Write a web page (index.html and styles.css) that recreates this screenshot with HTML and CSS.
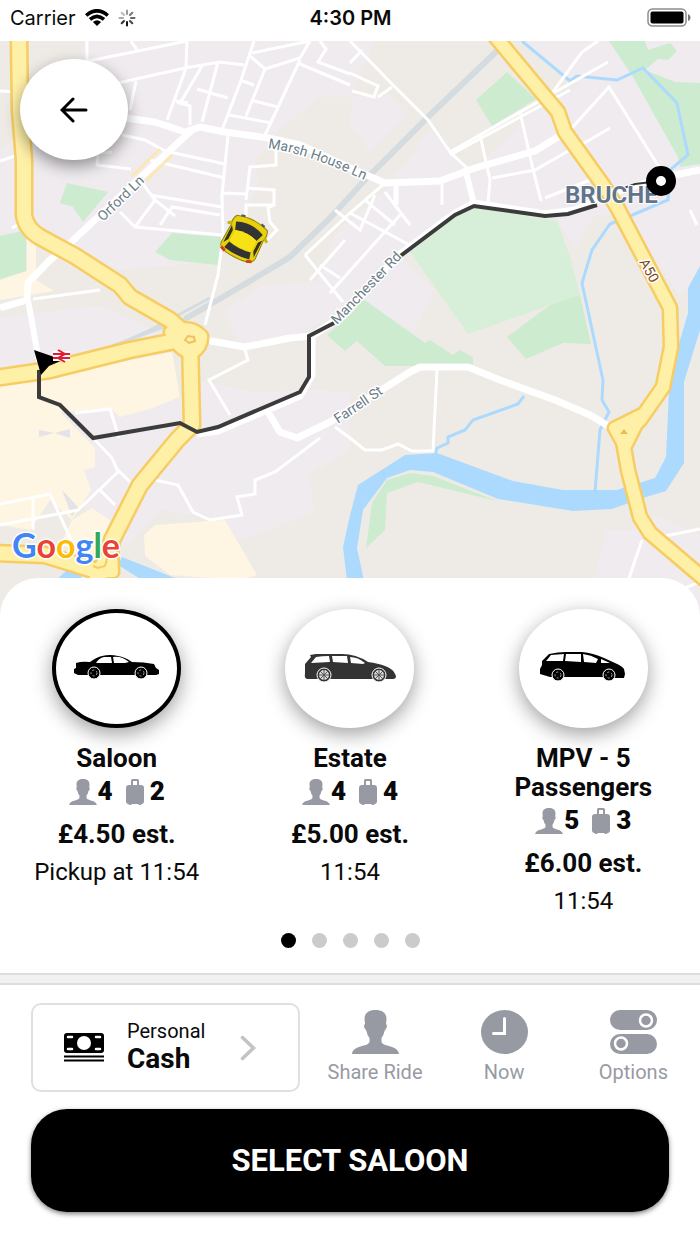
FILE: index.html
```html
<!DOCTYPE html>
<html lang="en">
<head>
<meta charset="utf-8">
<meta name="viewport" content="width=device-width, initial-scale=1">
<title>Choose a vehicle</title>
<link rel="stylesheet" href="styles.css">
</head>
<body>
<svg class="sprite" aria-hidden="true">
  <symbol id="person" viewBox="0 0 47 44">
    <path d="M23.500 0C30 0 34.500 3 34.500 9L34 14Q35.500 15 34.500 18L32.500 21Q31.500 26 29.500 28V32C31 37 46 35 47 44H0C1 35 16 37 17.500 32V28Q15 25 14.500 21L12.500 18Q11.500 15 13 14L12.500 9C12.500 3 17 0 23.500 0Z"/>
  </symbol>
  <symbol id="bag" viewBox="0 0 18 26">
    <path fill-rule="evenodd" d="M5 6V1.500Q5 0 6.500 0H11.500Q13 0 13 1.500V6H15Q18 6 18 9V22Q18 25 15.500 25Q15.500 26 14 26Q12.500 26 12 25H6Q5.500 26 4 26Q2.500 26 2.500 25Q0 25 0 22V9Q0 6 3 6ZM7 2V6H11V2Z"/>
  </symbol>
</svg>

<header class="status">
  <div class="status-left">
    <span class="carrier">Carrier</span>
    <svg class="wifi" viewBox="0 0 24 17" aria-hidden="true">
      <g fill="none" stroke="#000" stroke-width="3.600"><path d="M1.200 6.500Q12-2.900 22.800 6.500"/><path d="M5 10.400Q12 4.300 19 10.400"/></g>
      <path d="M12 17L7.900 12.900Q12 9.600 16.100 12.900Z"/>
    </svg>
    <svg class="spinner" viewBox="-9 -9 18 18" aria-hidden="true">
      <g stroke-width="2" stroke-linecap="round">
        <path stroke="#999" d="M0-7.500V-4"/><path stroke="#777" d="M5.300-5.300L3-3"/><path stroke="#666" d="M7.500 0H4"/><path stroke="#444" d="M5.300 5.300L3 3"/>
        <path stroke="#111" d="M0 7.500V4"/><path stroke="#333" d="M-5.300 5.300L-3 3"/><path stroke="#aaa" d="M-7.500 0H-4"/><path stroke="#bbb" d="M-5.300-5.300L-3-3"/>
      </g>
    </svg>
  </div>
  <time class="clock">4:30 PM</time>
  <svg class="battery" viewBox="0 0 44 19" aria-hidden="true">
    <rect x="1" y="1" width="38" height="17" rx="4.500" fill="#fff" stroke="#8d8d8d" stroke-width="1.500"/>
    <rect x="3.500" y="3.500" width="33" height="12" rx="2" fill="#000"/>
    <path d="M41 6Q43.500 7 43.500 9.500T41 13Z" fill="#777"/>
  </svg>
</header>

<main>
  <section class="map" aria-label="Map">
    <svg class="map-canvas" viewBox="0 41 700 580" preserveAspectRatio="xMidYMin slice">
      <rect y="41" width="700" height="580" fill="#eeebe6"/>
      <g fill="#efebef">
        <path d="M85 41H375L350 97H318L280 130L255 160L258 185L235 240L210 262L120 270L80 250L0 230V150L40 120L75 70Z"/>
        <path d="M352 97L392 95L406 116L370 152L350 125Z"/>
        <path d="M335 235L385 190L430 130L470 175L535 110L580 85L520 41H700V270L680 296L625 215L595 215L575 250L555 215L475 205L400 255L330 325L310 300Z"/>
        <path d="M225 310L262 285L320 282L335 310L310 330L240 345Z"/>
        <path d="M400 256L434 290L414 333L360 297Z"/>
        <path d="M0 318L100 305L165 335L110 353L0 367Z"/>
        <path d="M178 400L198 380L255 392L310 390L350 392V450L308 475L315 512L238 542L225 520L160 510L128 545L85 510L60 412Z"/>
        <path d="M606 530L645 530L655 515L700 535V621H585Z"/>
      </g>
      <g fill="#fef5e3">
        <path d="M0 385L172 352L180 397L150 409L120 417L112 410L60 412L95 448V467L84 470L91 490L72 520L50 500L30 530L0 525Z"/>
        <path d="M72 520L92 508L110 520L98 555L60 545Z"/>
        <path d="M144 535L155 525L225 520L257 575L240 580L170 575L145 556Z"/>
        <path d="M27 228H36V280L54 291L0 300V280L27 271Z"/>
      </g>
      <g fill="#e5e2e8"><path d="M39 430L54 433L39 437ZM55 433L70 429V438ZM62 490L78 507L72 517Z"/></g>
      <g fill="#cdebcf">
        <path d="M67 183L108 192L83 222L73 207L60 203Z"/><path d="M0 236L26 230V271L0 279Z"/>
        <path d="M172 233L222 237L218 265L170 260L155 252Z"/><path d="M507 72L536 99L492 126L476 100Z"/>
        <path d="M609 41H645L648 50L670 43L677 51L668 60L658 59L645 70L675 82L700 83V164L680 167L678 157L633 77Z"/>
        <path d="M580 295L591 344L563 343L526 359L507 337L550 305Z"/>
        <path d="M363 299L425 343L430 340L453 355L460 350L473 357V366H385L357 341L345 351L327 335L352 313Z"/>
        <path d="M372 503L387 480L410 473L433 476L497 501L418 482L387 493L385 530L366 548Z"/>
      </g>
      <path fill="#d7eed8" d="M410 252L460 213L477 208L557 221L570 257L580 295L550 305L468 334Z"/>
      <g fill="none" stroke="#d5dce0">
        <path stroke-width="6" d="M500 48L430 115L365 180L330 218L290 257L245 284L185 319"/>
        <path stroke-width="3" d="M185 319L80 358M210 298L150 330L105 350"/>
      </g>
      <g fill="#acdaff">
        <path d="M348 590L343 547L350 515L358 485L405 455L437 453L513 481L563 490H617L655 478L666 457L669 390L678 347L688 313V288L700 266V330L684 382V463L666 491L643 498L612 509L573 511L498 499L433 472L410 470L387 478L363 510L357 548L366 590Z"/>
        <path d="M122 557L180 580H142L118 565ZM74 564L56 580H80L90 560Z"/>
      </g>
      <g fill="none" stroke="#acdaff" stroke-width="3">
        <path d="M522 41L570 81L577 76L617 80L643 68L677 103L688 155L670 170L668 200L630 216L610 224L592 250L582 283L603 380L602 400L609 412L600 430L595 492"/>
        <path d="M524 396L518 404L473 420L465 430L448 437V443L437 448L435 455"/>
      </g>

      <g class="lane">
        <path d="M87 41V60M84 62L187 41M131 41L137 50M118 83L185 68L220 62L244 65M187 41L186 68L167 120M202 66L182 100L179 103L190 106V125M218 62L202 122M197 89L228 98M254 41L240 83L222 130M176 101L188 103M240 80L254 85M250 56L265 69L246 116M252 53L310 41M265 69L300 58L310 41M300 60L265 135M300 64L350 85M320 41L326 49L318 62L350 74M254 101L278 107M229 115L272 123"/>
        <path d="M136 81L130 110M122 135L145 140L165 151L225 164M112 152L98 153L97 165L131 169M150 160L225 178M228 135L222 195L223 235L218 275L205 325M276 145V165L250 167L246 200M222 193L246 194M246 188L274 190V205L268 208L270 222L277 230L265 242M140 180L155 200L135 227L120 212M135 227L222 235M160 225L172 207L220 215M155 200L175 216M150 195L222 207M274 205H246V220"/>
        <path d="M0 161L18 155M0 91L18 92M12 228L28 219M33 299L100 290M305 255L350 213L385 183M305 255L343 302M310 280L345 240M320 265L340 278M330 293L400 215M350 213L415 248M365 200L395 225M375 195L360 230L335 210M385 192L410 225M395 183V205"/>
        <path d="M350 41L395 87L428 120L450 152L467 168M350 63L362 50M350 73L378 86L374 97L352 91M378 97L392 87M450 152L536 103L608 62M450 155L570 90M520 112L532 165L541 201M480 135L490 180L488 203M492 178L535 170L570 150M397 183L397 205M442 182V205M610 128L569 152M570 130L609 87L664 175M550 96L582 52L598 41M545 198L590 180M690 210L697 225"/>
        <path d="M245 350L248 360L209 380L230 415M75 413L110 409L119 438M95 440L112 458L118 472L78 510L0 525M118 470L130 482M100 490L115 505M0 504L50 494L72 542M33 498V530M155 480L178 485L193 512L210 520L242 515L237 497L255 494V480L275 472L320 438M335 427L350 438L365 450H382L398 444L412 451H433L437 370M642 540L625 590M665 536L700 529M680 590L700 582"/>
      </g>
      <path class="lane wide" d="M465 168L474 204M28 300L39 362"/>
      <g class="street">
        <path d="M125 118L155 122L185 132L200 127L225 132L268 138L300 145L350 168L385 183L440 181L475 168L535 151L566 132"/>
        <path d="M193 129L140 178L68 245L50 260L28 283L27 300L0 308"/>
        <path d="M205 340L245 347L290 338L312 336L333 322L400 254L455 213L474 203L545 214L575 210L600 197L660 178L700 170M312 338V375L300 396L218 431L197 434"/>
        <path d="M268 412L280 432L297 438L330 422L410 372L420 367H468L500 380L555 400L590 415L615 430"/>
      </g>
      <g fill="none" stroke="#fce8b5" stroke-width="3"><path d="M160 149L132 176M172 155L146 181"/></g>

      <g class="highway-edge">
        <path d="M19 35L20 110L24 160V215Q26 229 40 237L75 256L120 285L130 297L170 320L190 338M-5 378L50 370L130 350L190 338L192 425L177 440L140 485L112 540L108 562L90 590M-5 553L45 555L100 572"/>
        <path class="a-road" d="M494 35L558 112L565 132L603 185L617 207L670 308L671 347L663 387L640 420L622 436L628 470L640 517L650 533L710 584"/>
        <path class="junction" d="M170 332Q190 323 202 336Q203 346 192 354Q177 350 170 332ZM614 428L642 414L625 448ZM96 572L112 548L113 572Z"/>
      </g>
      <g class="highway">
        <path d="M19 35L20 110L24 160V215Q26 229 40 237L75 256L120 285L130 297L170 320L190 338M-5 378L50 370L130 350L190 338L192 425L177 440L140 485L112 540L108 562L90 590M-5 553L45 555L100 572"/>
        <path class="a-road" d="M494 35L558 112L565 132L603 185L617 207L670 308L671 347L663 387L640 420L622 436L628 470L640 517L650 533L710 584"/>
        <path class="junction" d="M170 332Q190 323 202 336Q203 346 192 354Q177 350 170 332ZM614 428L642 414L625 448ZM96 572L112 548L113 572Z"/>
      </g>
      <path d="M185 340L188 336L194 337L195 341L189 343Z" fill="#fff0a8" stroke="#eec15c" stroke-width="2"/>
      <path d="M620 434L624 429L628 434Z" fill="#e9bd55"/>
      <path d="M93 566L98 568L105 566L108 555" fill="none" stroke="#f7cc62" stroke-width="2"/>

      <g class="route"><path d="M39 370V397L60 405L93 438L180 423L197 432L218 427L300 392L309 377V336L334 323M399 257L455 215L474 206L545 216L568 214L597 205"/><path stroke-width="2" d="M624 188L635 184L660 181"/></g>

      <defs><path id="marsh" d="M268 148Q314 155 370 183"/></defs>
      <g class="label">
        <text><textPath href="#marsh">Marsh House Ln</textPath></text>
        <text transform="translate(103 222) rotate(-44)">Orford Ln</text>
        <text transform="translate(337 325) rotate(-46)">Manchester Rd</text>
        <text transform="translate(338 424) rotate(-34)">Farrell St</text>
        <text class="a50" transform="translate(639 262) rotate(61)">A50</text>
        <text class="district" x="565" y="203">BRUCHE</text>
      </g>

      <path d="M34 350L63 360L49 366L41 375Z" fill="#000"/>
      <g fill="none"><path stroke="#fff" stroke-width="6" d="M53 354H70M53 358H70"/><path stroke="#e31b35" stroke-width="2" d="M53 354H70M53 358H70M58 350L65 354L58 358L65 362"/></g>
      <circle cx="661" cy="181" r="10" fill="#fff" stroke="#000" stroke-width="10"/>

      <g transform="translate(244 239) rotate(27)">
        <path d="M-17-18Q0-24 17-18Q20-13 18-7L19 13Q18 18 14 19Q0 22-14 19Q-18 18-19 13L-18-7Q-20-13-17-18Z" fill="#e9d00c" stroke="#8f8412" stroke-width="1"/>
        <path d="M-15-12Q0-19 15-12L12-4Q0-8-12-4Z" fill="#333"/><path d="M-12 9Q0 12 12 9L14 16Q0 19-14 16Z" fill="#333"/>
        <path d="M-17-7L-14-3V7L-17 12ZM17-7L14-3V7L17 12Z" fill="#34321a"/>
        <path d="M-12-4Q0-8 12-4V8Q0 11-12 8Z" fill="#f7e315"/>
        <path d="M-18-10L-22-7M18-10L22-7" stroke="#c9b40c" stroke-width="3"/>
        <path d="M-17 17L-12 19M17 17L12 19" stroke="#d2401c" stroke-width="3"/><path d="M-13-20L-9-21M13-20L9-21" stroke="#555" stroke-width="2"/>
      </g>

      <text class="google" x="12" y="558"><tspan fill="#4285f4">G</tspan><tspan fill="#ea4335">o</tspan><tspan fill="#fbbc05">o</tspan><tspan fill="#4285f4">g</tspan><tspan fill="#34a853">l</tspan><tspan fill="#ea4335">e</tspan></text>
    </svg>
    <button class="back" type="button" aria-label="Back">
      <svg viewBox="0 0 28 26" aria-hidden="true"><path d="M26 13H3M13 2L2 13L13 24" fill="none" stroke="#000" stroke-width="3" stroke-linecap="round"/></svg>
    </button>
  </section>

  <section class="sheet">
    <div class="vehicles">
      <button class="vehicle selected" type="button">
        <span class="disc"><svg class="car saloon" viewBox="0 0 86 24" aria-hidden="true">
          <path d="M0 14L2 13V8Q8 6 16 7Q23 2 28 1Q36-1 44 1Q51 2 58 7Q70 7 80 9L82 13L85 15V19L82 20H4L0 18Z"/>
          <path fill="#fff" d="M22 8Q25 3 30 2H37L38 8ZM39 2Q48 1 55 7L51 8H40Z"/>
          <g stroke="#fff" stroke-width="1"><circle cx="20" cy="18" r="6"/><circle cx="67" cy="18" r="6"/></g>
          <g fill="none" stroke="#aaa" stroke-width="1" stroke-dasharray="2 2"><circle cx="20" cy="18" r="3"/><circle cx="67" cy="18" r="3"/></g>
        </svg></span>
        <span class="name">Saloon</span>
        <span class="capacity"><svg class="i-person"><use href="#person"/></svg><b>4</b><svg class="i-bag"><use href="#bag"/></svg><b>2</b></span>
        <span class="price">£4.50 est.</span>
        <span class="eta">Pickup at 11:54</span>
      </button>
      <button class="vehicle" type="button">
        <span class="disc"><svg class="car estate" viewBox="0 0 92 30" aria-hidden="true">
          <path fill="#333" d="M1 10L7 3L6 1L12 0H38Q52 0 64 8Q85 11 90 18L92 22Q92 25 89 25H3Q0 24 1 20Z"/>
          <path fill="#fff" d="M7 9L12 3Q18 2 25 2L26 8ZM28 2H43L44 9L29 8ZM46 3Q54 3 61 9L59 10L47 9Z"/>
          <g stroke="#fff" stroke-width="1" fill="#333"><circle cx="20" cy="21" r="7"/><circle cx="75" cy="21" r="7"/></g>
          <g fill="#ddd"><circle cx="20" cy="21" r="5"/><circle cx="75" cy="21" r="5"/></g>
          <path stroke="#555" stroke-width="1" d="M20 16V26M15 21H25M16 17L24 25M16 25L24 17M75 16V26M70 21H80M71 17L79 25M71 25L79 17"/>
        </svg></span>
        <span class="name">Estate</span>
        <span class="capacity"><svg class="i-person"><use href="#person"/></svg><b>4</b><svg class="i-bag"><use href="#bag"/></svg><b>4</b></span>
        <span class="price">£5.00 est.</span>
        <span class="eta">11:54</span>
      </button>
      <button class="vehicle" type="button">
        <span class="disc"><svg class="car mpv" viewBox="0 0 86 30" aria-hidden="true">
          <path d="M0 17L2 13V9L9 2Q18 0 26 0H42Q53 1 64 6L75 11Q82 14 84 17L85 22L84 26H76L61 25H26L10 25L0 22Z"/>
          <path fill="#fff" d="M6 9L11 3L24 2L23 9ZM26 2H41V10L25 9ZM43 2Q51 3 58 7L56 11L44 10ZM61 7L70 11H61Z"/>
          <g stroke="#fff" stroke-width="1"><circle cx="18" cy="23" r="6"/><circle cx="69" cy="23" r="6"/></g>
          <g fill="none" stroke="#aaa" stroke-width="1" stroke-dasharray="2 2"><circle cx="18" cy="23" r="3"/><circle cx="69" cy="23" r="3"/></g>
        </svg></span>
        <span class="name">MPV - 5 Passengers</span>
        <span class="capacity"><svg class="i-person"><use href="#person"/></svg><b>5</b><svg class="i-bag"><use href="#bag"/></svg><b>3</b></span>
        <span class="price">£6.00 est.</span>
        <span class="eta">11:54</span>
      </button>
    </div>
    <div class="dots" aria-hidden="true"><i class="on"></i><i></i><i></i><i></i><i></i></div>
    <div class="divider"></div>
    <div class="actions">
      <button class="payment" type="button">
        <svg class="i-cash" viewBox="0 0 40 29" aria-hidden="true">
          <rect width="40" height="20" rx="3"/><circle cx="20" cy="10" r="7" fill="#fff"/>
          <path d="M4 4H8M4 16H8M32 4H36M32 16H36" stroke="#fff" stroke-width="2.500" stroke-linecap="round"/><path d="M0 23.500H40M0 27.500H40" stroke="#000" stroke-width="2"/>
        </svg>
        <span class="pay-text"><span class="pay-type">Personal</span><span class="pay-name">Cash</span></span>
        <svg class="i-next" viewBox="0 0 16 26" aria-hidden="true"><path d="M2.500 2.500L13.500 13L2.500 23.500" fill="none" stroke="#c3c3c3" stroke-width="3.500" stroke-linecap="round"/></svg>
      </button>
      <button class="action" type="button"><svg class="i-action"><use href="#person"/></svg>Share Ride</button>
      <button class="action" type="button">
        <svg class="i-action" viewBox="0 0 47 44" aria-hidden="true"><ellipse cx="23.500" cy="22" rx="23.500" ry="22"/><path d="M23.500 8.500V23.500H12.500" fill="none" stroke="#fff" stroke-width="3" stroke-linecap="round"/></svg>Now</button>
      <button class="action" type="button">
        <svg class="i-action" viewBox="0 0 47 44" aria-hidden="true"><rect width="47" height="20" rx="10"/><rect y="24" width="47" height="20" rx="10"/><g fill="none" stroke="#fff" stroke-width="2.500"><circle cx="36" cy="10.500" r="6"/><circle cx="11" cy="33.500" r="6"/></g></svg>Options</button>
    </div>
    <button class="confirm" type="button">SELECT SALOON</button>
  </section>
</main>
</body>
</html>
```
FILE: styles.css
```css
* { box-sizing: border-box; }

body {
  margin: 0;
  background: #fff;
  color: #0a0a0a;
  font-family: Roboto, "Liberation Sans", sans-serif;
}

button {
  margin: 0;
  padding: 0;
  border: 0;
  background: none;
  color: inherit;
  font: inherit;
  cursor: pointer;
}

svg { display: block; }

.sprite { display: none; }

.status {
  display: grid;
  grid-template-columns: 1fr auto 1fr;
  align-items: center;
  height: 41px;
  padding: 0 9px 6px 10px;
  font-family: Inter, "Liberation Sans", sans-serif;
  font-size: 20px;
}

.status-left { display: flex; align-items: center; gap: 9px; }
.wifi { width: 24px; height: 17px; }
.spinner { width: 18px; height: 18px; }
.clock { font-weight: 600; }
.battery { width: 44px; height: 19px; justify-self: end; }

.map { position: relative; }
.map-canvas { width: 100%; aspect-ratio: 700 / 580; max-height: 900px; }

.lane { fill: none; stroke: #fff; stroke-width: 3; }
.lane.wide { stroke-width: 6; }
.street { fill: none; stroke: #fff; stroke-width: 7; stroke-linejoin: round; }
.highway-edge, .highway { stroke-linejoin: round; fill: none; }
.highway-edge { stroke: #f7cc62; stroke-width: 19; }
.highway { stroke: #fff0a8; stroke-width: 14; }
.highway-edge .a-road { stroke-width: 17; }
.highway .a-road { stroke-width: 12; }
.highway-edge .junction { stroke-width: 15; }
.highway .junction { stroke-width: 10; fill: #fff0a8; }
.route { fill: none; stroke: #3b3b3b; stroke-width: 4; }

.label {
  fill: #6b7c88;
  stroke: #fff;
  stroke-width: 3px;
  stroke-linejoin: round;
  paint-order: stroke;
  font-size: 14px;
}
.a50 { fill: #7b4a1c; }
.district { fill: #62748a; stroke-width: 2px; font-size: 24px; font-weight: 700; }

.google {
  font-family: Lato, sans-serif;
  font-size: 34px;
  font-weight: 700;
  stroke: #fff;
  stroke-width: 3px;
  paint-order: stroke;
}

.back {
  position: absolute;
  top: 18px;
  left: 20px;
  display: grid;
  place-items: center;
  width: 108px;
  height: 101px;
  border-radius: 50%;
  background: #fff;
  box-shadow: 0 6px 16px rgba(0, 0, 0, .4);
}
.back svg { width: 28px; height: 26px; }

.sheet {
  position: relative;
  margin-top: -43px;
  padding: 31px 0 32px;
  border-radius: 38px 38px 0 0;
  background: #fff;
}

.vehicles { display: grid; grid-template-columns: repeat(3, 1fr); align-items: start; }

.vehicle {
  display: flex;
  flex-direction: column;
  align-items: center;
  padding: 0 32px;
  font-size: 26px;
  font-weight: 700;
  line-height: 29px;
}

.disc {
  display: grid;
  place-items: center;
  width: 129px;
  height: 119px;
  margin-bottom: 16px;
  border-radius: 50%;
  background: #fff;
  box-shadow: 0 6px 20px rgba(0, 0, 0, .38);
}
.selected .disc { border: 4px solid #000; }
.car { width: 86px; margin-bottom: 4px; }
.saloon { height: 24px; }
.estate { width: 92px; height: 30px; margin-bottom: 0; }
.mpv { height: 30px; }

.capacity { display: flex; align-items: center; margin-top: 4px; }
.i-person { width: 28px; height: 26px; margin-right: 1px; fill: #989aa3; }
.i-bag { width: 18px; height: 26px; margin: 0 6px 0 13px; fill: #989aa3; }
.price { margin-top: 14px; white-space: nowrap; }
.eta { margin-top: 9px; font-size: 24px; font-weight: 400; white-space: nowrap; }

.dots { display: flex; justify-content: center; gap: 16px; margin-top: 17px; }
.dots i { width: 15px; height: 15px; border-radius: 50%; background: #cbcbcb; }
.dots .on { background: #000; }

.divider {
  height: 12px;
  margin-top: 25px;
  border: solid #ddd;
  border-width: 2px 0;
  background: #f1f1f1;
}

.actions {
  display: grid;
  grid-template-columns: 279fr 129fr 129fr 129fr;
  align-items: center;
  padding: 18px 2px 17px 31px;
}

.payment {
  display: flex;
  align-items: center;
  height: 89px;
  margin-right: 10px;
  padding: 0 42px 0 31px;
  border: 2px solid #e0e0e0;
  border-radius: 10px;
  text-align: left;
}
.i-cash { width: 40px; height: 29px; margin-right: 23px; }
.pay-text { display: flex; flex-direction: column; flex: 1; padding-bottom: 4px; }
.pay-type { font-size: 20px; line-height: 25px; }
.pay-name { font-size: 28px; font-weight: 700; line-height: 29px; }
.i-next { width: 16px; height: 26px; }

.action {
  display: flex;
  flex-direction: column;
  align-items: center;
  gap: 6px;
  color: #989aa3;
  font-size: 20px;
  line-height: 25px;
  white-space: nowrap;
}
.i-action { width: 47px; height: 44px; fill: #989aa3; }

.confirm {
  display: block;
  width: calc(100% - 62px);
  margin: 0 31px;
  padding: 34px 0;
  border-radius: 36px;
  background: #000;
  box-shadow: 0 2px 5px rgba(0, 0, 0, .5);
  color: #fff;
  font-size: 31px;
  font-weight: 700;
  line-height: 35px;
}
```
